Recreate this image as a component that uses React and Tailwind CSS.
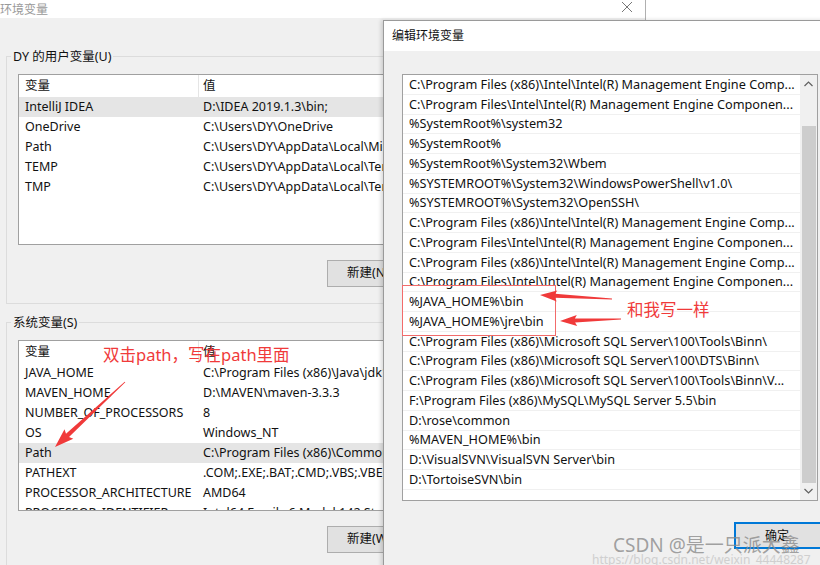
import React from "react";

const userVars = [
  ["IntelliJ IDEA", "D:\\IDEA 2019.1.3\\bin;", true],
  ["OneDrive", "C:\\Users\\DY\\OneDrive"],
  ["Path", "C:\\Users\\DY\\AppData\\Local\\Microsoft\\WindowsApps"],
  ["TEMP", "C:\\Users\\DY\\AppData\\Local\\Temp"],
  ["TMP", "C:\\Users\\DY\\AppData\\Local\\Temp"],
];

const sysVars = [
  ["JAVA_HOME", "C:\\Program Files (x86)\\Java\\jdk1.8.0_152"],
  ["MAVEN_HOME", "D:\\MAVEN\\maven-3.3.3"],
  ["NUMBER_OF_PROCESSORS", "8"],
  ["OS", "Windows_NT"],
  ["Path", "C:\\Program Files (x86)\\Common Files\\Oracle\\Java", true],
  ["PATHEXT", ".COM;.EXE;.BAT;.CMD;.VBS;.VBE;.JS;.JSE"],
  ["PROCESSOR_ARCHITECTURE", "AMD64"],
  ["PROCESSOR_IDENTIFIER", "Intel64 Family 6 Model 142 Stepping 10"],
];

const paths = [
  "C:\\Program Files (x86)\\Intel\\Intel(R) Management Engine Comp...",
  "C:\\Program Files\\Intel\\Intel(R) Management Engine Componen...",
  "%SystemRoot%\\system32",
  "%SystemRoot%",
  "%SystemRoot%\\System32\\Wbem",
  "%SYSTEMROOT%\\System32\\WindowsPowerShell\\v1.0\\",
  "%SYSTEMROOT%\\System32\\OpenSSH\\",
  "C:\\Program Files (x86)\\Intel\\Intel(R) Management Engine Comp...",
  "C:\\Program Files\\Intel\\Intel(R) Management Engine Componen...",
  "C:\\Program Files (x86)\\Intel\\Intel(R) Management Engine Comp...",
  "C:\\Program Files\\Intel\\Intel(R) Management Engine Componen...",
  "%JAVA_HOME%\\bin",
  "%JAVA_HOME%\\jre\\bin",
  "C:\\Program Files (x86)\\Microsoft SQL Server\\100\\Tools\\Binn\\",
  "C:\\Program Files (x86)\\Microsoft SQL Server\\100\\DTS\\Binn\\",
  "C:\\Program Files (x86)\\Microsoft SQL Server\\100\\Tools\\Binn\\V...",
  "F:\\Program Files (x86)\\MySQL\\MySQL Server 5.5\\bin",
  "D:\\rose\\common",
  "%MAVEN_HOME%\\bin",
  "D:\\VisualSVN\\VisualSVN Server\\bin",
  "D:\\TortoiseSVN\\bin",
];

// tapered annotation arrow, tail -> tip
function arrowPoints(tail, tip, head = 15, barb = 5.5, shaft = 2) {
  const dx = tip[0] - tail[0];
  const dy = tip[1] - tail[1];
  const len = Math.hypot(dx, dy);
  const ux = dx / len, uy = dy / len;
  const nx = -uy, ny = ux;
  const bx = tip[0] - ux * head, by = tip[1] - uy * head;
  const kx = bx - ux * 2, ky = by - uy * 2;
  const p = [
    [tail[0] + nx * 0.4, tail[1] + ny * 0.4],
    [bx + nx * shaft, by + ny * shaft],
    [kx + nx * barb, ky + ny * barb],
    tip,
    [kx - nx * barb, ky - ny * barb],
    [bx - nx * shaft, by - ny * shaft],
    [tail[0] - nx * 0.4, tail[1] - ny * 0.4],
  ];
  return p.map((q) => q[0].toFixed(1) + "," + q[1].toFixed(1)).join(" ");
}

function VarList({ rows }) {
  return (
    <div className="h-[171px] w-[420px] overflow-hidden border border-[#a0a0a0] bg-white">
      <div className="flex h-[22px] items-center">
        <div className="h-full w-[180px] shrink-0 border-r border-[#e5e5e5] pl-[6px] leading-[22px]">变量</div>
        <div className="pl-[4px]">值</div>
      </div>
      {rows.map(([name, value, sel]) => (
        <div key={name} className={`flex h-[20px] items-center whitespace-nowrap ${sel ? "bg-[#e5e5e5]" : ""}`}>
          <div className="w-[180px] shrink-0 pl-[6px]">{name}</div>
          <div className="pl-[4px]">{value}</div>
        </div>
      ))}
    </div>
  );
}

function Group({ label, rows, button }) {
  return (
    <fieldset className="border border-[#dcdcdc] px-0 pb-[16px]">
      <legend className="ml-[4px] px-[2px] leading-[17px]">{label}</legend>
      <div className="pl-[11px] pt-[9px]">
        <VarList rows={rows} />
        <div className="mt-[15px] pl-[309px]">
          <div className="flex h-[27px] w-[100px] items-center border border-[#adadad] bg-[#e1e1e1] pl-[19px]">{button}</div>
        </div>
      </div>
    </fieldset>
  );
}

export default function App() {
  const red = "#f03a3a";
  return (
    <div className="relative h-[565px] w-[820px] overflow-hidden bg-white font-['Noto_Sans','Noto_Sans_CJK_SC',sans-serif] text-[12.5px] text-[#111]">
      {/* 环境变量 window (behind) */}
      <div className="absolute left-0 top-0 flex h-[565px] w-[646px] flex-col border-r border-[#b0b0b0] bg-[#f0f0f0]">
        <div className="flex h-[22px] items-start justify-between bg-white">
          <span className="pt-[2px] text-[12px] leading-[16px] text-[#999]">环境变量</span>
          <svg width="12" height="12" viewBox="0 0 12 12" className="mr-[12px] mt-[1px]">
            <path d="M1 1L11 11M11 1L1 11" stroke="#777" strokeWidth="1" />
          </svg>
        </div>
        <div className="flex flex-col gap-[10px] pl-[6px] pt-[30px]">
          <Group label="DY 的用户变量(U)" rows={userVars} button="新建(N)" />
          <Group label="系统变量(S)" rows={sysVars} button="新建(W)" />
        </div>
      </div>

      {/* 编辑环境变量 dialog */}
      <div className="absolute left-[383px] top-[20px] flex h-[560px] w-[460px] flex-col border border-[#9a9a9a] bg-[#f0f0f0] shadow-[-2px_0_4px_rgba(0,0,0,0.15)]">
        <div className="flex h-[30px] items-center bg-white pl-[8px] text-[12px]">编辑环境变量</div>
        <div className="pl-[18px] pt-[23px]">
          <div className="flex h-[427px] w-[416px] border border-[#a0a0a0] bg-white text-[12.7px]">
            <div className="flex-1 overflow-hidden">
              {paths.map((p, i) => (
                <div key={i} className="flex h-[19.75px] items-center truncate whitespace-nowrap border-b border-[#f0f0f0] pl-[6px]">
                  {p}
                </div>
              ))}
            </div>
            <div className="flex w-[17px] flex-col items-center bg-[#f0f0f0]">
              <svg width="9" height="6" viewBox="0 0 9 6" className="mt-[6px]">
                <path d="M0.5 5L4.5 1L8.5 5" stroke="#606060" strokeWidth="1.2" fill="none" />
              </svg>
              <div className="mt-[39px] h-[357px] w-[14px] bg-[#cdcdcd]" />
              <svg width="9" height="6" viewBox="0 0 9 6" className="mt-[5px]">
                <path d="M0.5 1L4.5 5L8.5 1" stroke="#606060" strokeWidth="1.2" fill="none" />
              </svg>
            </div>
          </div>
          <div className="mt-[21px] pl-[332px]">
            <div className="flex h-[27px] w-[100px] items-center border-2 border-[#0078d7] bg-[#e1e1e1] pl-[29px] text-[12px]">确定</div>
          </div>
        </div>
      </div>

      {/* annotations */}
      <div className="absolute left-[402px] top-[285px] h-[51px] w-[154px] border border-[#f26b6b]" />
      <div className="absolute left-[103px] top-[344px] text-[16.5px] leading-[22px] text-[#f03a3a]">双击path，写在path里面</div>
      <div className="absolute left-[627px] top-[299px] text-[16.5px] leading-[22px] text-[#f03a3a]">和我写一样</div>
      <svg className="pointer-events-none absolute left-0 top-0" width="820" height="565">
        <polygon points={arrowPoints([125, 382], [55, 447], 17, 6.5, 2.2)} fill={red} />
        <polygon points={arrowPoints([612, 299], [540, 295])} fill={red} />
        <polygon points={arrowPoints([621, 319], [560, 321])} fill={red} />
      </svg>

      {/* watermark */}
      <div className="absolute left-[613px] top-[532px] text-[19px] leading-[26px] text-[#8a8a8a]/80">CSDN @是一只派大鑫</div>
      <div className="absolute left-[592px] top-[552px] text-[12px] leading-[16px] text-[#cfcfcf]">https://blog.csdn.net/weixin_44448287</div>
    </div>
  );
}
